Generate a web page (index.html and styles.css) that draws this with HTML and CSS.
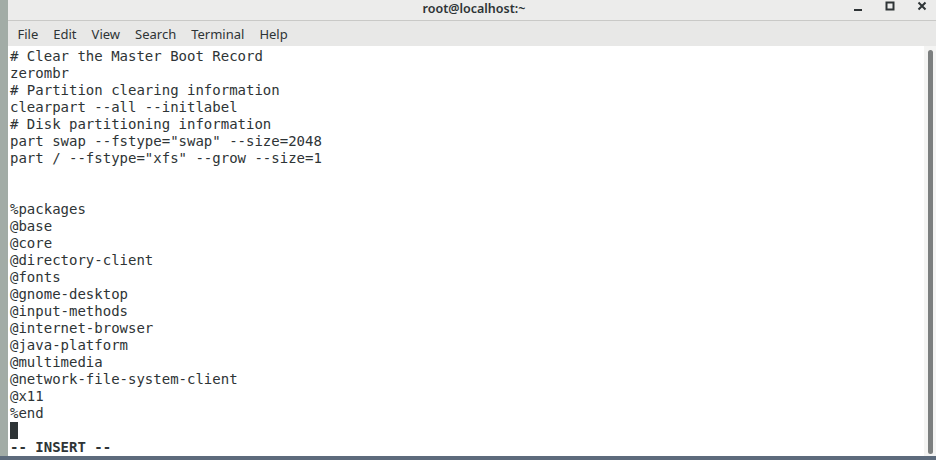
FILE: index.html
```html
<!DOCTYPE HTML>
<html>

<head>
    <meta charset="UTF-8">
    <title>root@localhost:~</title>
    <meta name="viewport" content="width=device-width, initial-scale=1">
    <link rel="stylesheet" href="styles.css">
</head>

<body>
    <div class="screen">
        <div class="edge"></div>
        <div class="window">
            <div class="titlebar">
                <span class="title">root@localhost:~</span>
                <div class="controls">
                    <svg class="ctl" width="12" height="12" viewBox="0 0 12 12"><rect x="2" y="8" width="8" height="2" fill="#2e3436"/></svg>
                    <svg class="ctl" width="12" height="12" viewBox="0 0 12 12"><rect x="2.5" y="1.5" width="7" height="7" fill="none" stroke="#2e3436" stroke-width="2"/></svg>
                    <svg class="ctl" width="12" height="12" viewBox="0 0 12 12"><path d="M2.5 1.5 L9.5 8.5 M9.5 1.5 L2.5 8.5" stroke="#2e3436" stroke-width="2"/></svg>
                </div>
            </div>
            <div class="menubar">
                <span class="menu">File</span>
                <span class="menu">Edit</span>
                <span class="menu">View</span>
                <span class="menu">Search</span>
                <span class="menu">Terminal</span>
                <span class="menu">Help</span>
            </div>
            <div class="term">
<pre class="text"># Clear the Master Boot Record
zerombr
# Partition clearing information
clearpart --all --initlabel
# Disk partitioning information
part swap --fstype="swap" --size=2048
part / --fstype="xfs" --grow --size=1


%packages
@base
@core
@directory-client
@fonts
@gnome-desktop
@input-methods
@internet-browser
@java-platform
@multimedia
@network-file-system-client
@x11
%end
<span class="cursor"> </span>
<b>-- INSERT --</b></pre>
                <div class="scroll"><div class="thumb"></div></div>
            </div>
        </div>
    </div>
</body>

</html>
```

FILE: styles.css
```css
html {
    font-family: "Noto Sans", sans-serif;
}

body {
    margin: 0;
    background-color: #5d6b7c;
}

.screen {
    display: flex;
    height: 456px;
}

.edge {
    width: 8px;
    background-color: #a2aca6;
}

.window {
    flex: 1;
    display: flex;
    flex-direction: column;
    background-color: #e8e8e7;
}

.titlebar {
    height: 21px;
    display: flex;
    align-items: flex-start;
    justify-content: center;
    background-color: #ececeb;
    border-bottom: 1px solid #c9c9c7;
    position: relative;
}

.title {
    font-size: 12.5px;
    line-height: 14px;
    font-weight: 600;
    color: #2e3436;
    margin-left: 4px;
    padding-top: 2px;
}

.controls {
    position: absolute;
    right: 8px;
    top: 1px;
    display: flex;
    gap: 20px;
}

.menubar {
    height: 26px;
    display: flex;
    align-items: center;
    padding-left: 2px;
    font-size: 13px;
    color: #2e3436;
}

.menu {
    padding: 0 7.5px;
}

.term {
    flex: 1;
    display: flex;
    background-color: #ffffff;
}

.text {
    flex: 1;
    margin: 0;
    padding: 2px 0 0 2px;
    font-family: "DejaVu Sans Mono", monospace;
    font-size: 14px;
    line-height: 17px;
    color: #2e3436;
}

.cursor {
    display: inline-block;
    width: 8px;
    height: 17px;
    vertical-align: top;
    background-color: #2e3436;
}

.scroll {
    width: 12px;
    padding: 4px 0 2px 0;
    display: flex;
    justify-content: center;
    background-color: #f4f4f3;
}

.thumb {
    width: 5px;
    border-radius: 3px;
    background-color: #7c7f7f;
}
```
